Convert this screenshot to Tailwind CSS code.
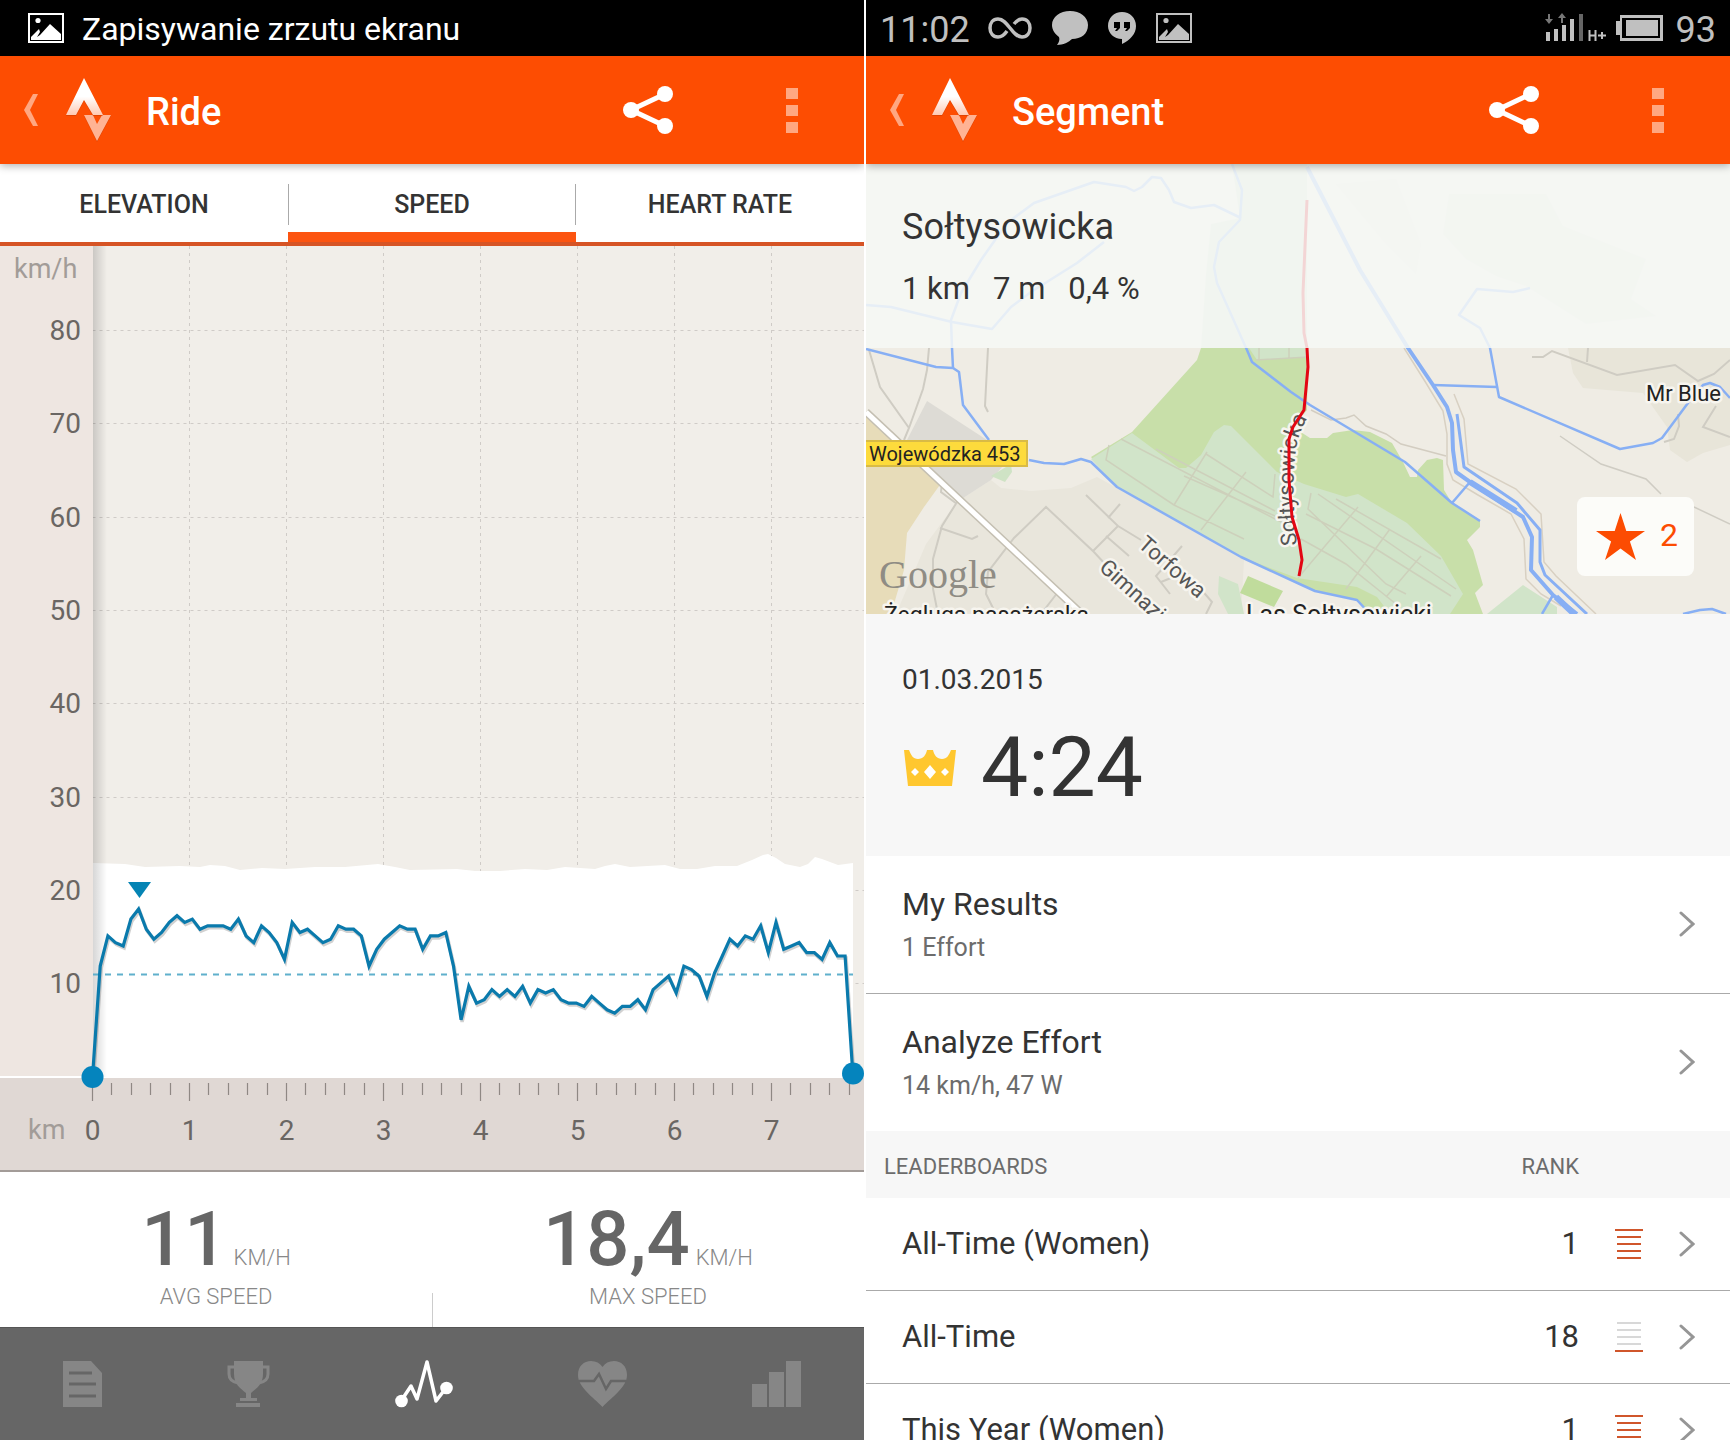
<!DOCTYPE html>
<html lang="en">
  <head>
    <meta charset="utf-8" />
    <meta name="viewport" content="width=device-width" />
    <title>Ride / Segment</title>
    <script src="https://cdn.jsdelivr.net/npm/@tailwindcss/browser@4"></script>
  </head>
  <body class="bg-white font-['Roboto','Noto_Sans',sans-serif] text-[#333]">
    <main class="grid grid-cols-2 gap-0.5 h-screen overflow-hidden">
      <!-- Ride screen -->
      <section class="flex flex-col min-w-0 overflow-hidden">
        <div class="flex items-center shrink-0 h-14 px-7 gap-[18px] bg-black text-white">
          <svg class="w-9 h-[30px]" viewBox="0 0 36 30">
            <rect x="1" y="1" width="34" height="28" fill="none" stroke="#fff" stroke-width="2" />
            <circle cx="10" cy="7.500" r="2.600" fill="#fff" />
            <path d="M3 27V24L11 16L12 19L9 24L12 22L22 11L33 21V27Z" fill="#fff" />
          </svg>
          <p class="pt-0.5 text-[32px] leading-9">Zapisywanie zrzutu ekranu</p>
        </div>

        <header class="relative z-10 flex items-center shrink-0 h-[108px] pl-6 pr-[66px] bg-[#fd4d02] text-white shadow-[0_2px_8px_rgba(0,0,0,0.3)]">
          <button class="flex items-center gap-7" aria-label="Back">
            <svg class="w-3.5 h-8" viewBox="0 0 14 32">
              <path d="M9 0H14L6 16L14 32H9L0 16Z" fill="#ffa781" />
            </svg>
            <svg class="w-[46px] h-16" viewBox="0 0 46 64">
              <defs>
                <linearGradient id="logoTop" x1="0" y1="0" x2="0" y2="1">
                  <stop offset="0.500" stop-color="#fff" />
                  <stop offset="1" stop-color="#ffc9b2" />
                </linearGradient>
              </defs>
              <path d="M18 38H27L31 47L36 38H45L31 64Z" fill="#c33a00" opacity="0.500" />
              <path d="M18 37H27L31 46L36 37H45L31 63Z" fill="#ffb394" />
              <path d="M18 1L0 38H10L18 23L27 38H37Z" fill="#c33a00" opacity="0.500" />
              <path d="M18 0L0 37H10L18 22L27 37H37Z" fill="url(#logoTop)" />
            </svg>
          </button>
          <h1 class="ml-[34px] pt-1 text-[38px] leading-[44px] font-medium">Ride</h1>
          <button class="ml-auto" aria-label="Share">
            <svg class="w-[50px] h-12" viewBox="0 0 50 48">
              <path d="M42 8L8 24L42 40" fill="none" stroke="#fff" stroke-width="5" />
              <circle cx="8" cy="24" r="8" fill="#fff" />
              <circle cx="42" cy="8" r="8" fill="#fff" />
              <circle cx="42" cy="40" r="8" fill="#fff" />
            </svg>
          </button>
          <button class="ml-[113px] flex flex-col gap-1.5" aria-label="More options">
            <span class="w-3 h-[11px] bg-[#ffa781]"></span>
            <span class="w-3 h-[11px] bg-[#ffa781]"></span>
            <span class="w-3 h-[11px] bg-[#ffa781]"></span>
          </button>
        </header>

        <nav class="grid grid-cols-3 shrink-0 h-[82px] border-b-4 border-[#d65425] text-[25px] leading-8 font-medium">
          <button class="flex items-center justify-center pt-1">ELEVATION</button>
          <button class="flex items-center justify-center pt-1 relative">
            SPEED
            <span class="absolute left-0 top-5 h-[41px] w-px bg-[#aaa]"></span>
            <span class="absolute right-0 top-5 h-[41px] w-px bg-[#aaa]"></span>
            <span class="absolute inset-x-0 bottom-0 h-2.5 bg-[#fc5410]"></span>
          </button>
          <button class="flex items-center justify-center pt-1">HEART RATE</button>
        </nav>

        <svg id="chart" class="block w-full h-auto shrink-0" viewBox="0 246 864 926" font-size="28" fill="#6a6663">
          <defs>
            <linearGradient id="axisShade">
              <stop offset="0" stop-color="#000" stop-opacity="0.160" />
              <stop offset="1" stop-color="#000" stop-opacity="0" />
            </linearGradient>
          </defs>
          <rect x="0" y="246" width="864" height="832" fill="#f1eee9" />
          <g id="grid" stroke="#cfcbc7" stroke-dasharray="3 4"></g>
          <path
            d="M93 863L125 864L145 867L180 866L200 867L210 865L225 866L240 870L262 868L285 869L315 867L345 867L378 864L395 867L410 870L457 869L475 871L500 871L525 869L547 870L565 867L595 869L605 866L615 864L630 867L665 865L680 869L697 869L715 866L737 866L752 860L763 855L768 854L776 858L785 864L800 867L808 864L815 857L822 859L838 865L853 863V1078H93Z"
            fill="#fff"
          />
          <rect x="93" y="246" width="14" height="831" fill="url(#axisShade)" />
          <rect x="0" y="246" width="93" height="831" fill="#eee6e1" />
          <rect x="0" y="1076" width="93" height="2" fill="#fff" />
          <rect x="0" y="1078" width="864" height="92" fill="#e0d8d4" />
          <rect x="0" y="1170" width="864" height="2" fill="#a39c98" />
          <g id="ticks" stroke="#8f8884" stroke-width="1.200"></g>
          <g id="yLabels" text-anchor="end"></g>
          <g id="xLabels" text-anchor="middle"></g>
          <text x="14" y="278" font-size="27" fill="#a29c98">km/h</text>
          <text x="28" y="1139" font-size="27" fill="#a29c98">km</text>
          <path d="M93 974.500H853" stroke="#5fb0cc" stroke-width="2" stroke-dasharray="6 6" />
          <polyline id="speedShadow" fill="none" stroke="#000" stroke-opacity="0.180" stroke-width="3.500" transform="translate(1 2)" />
          <polyline id="speedLine" fill="none" stroke="#0a7aac" stroke-width="3.200" />
          <path d="M128 882H151L139.500 898Z" fill="#0584b4" />
          <circle cx="92.500" cy="1077" r="11" fill="#0584bd" />
          <circle cx="853" cy="1073.500" r="11" fill="#0584bd" />
        </svg>

        <div class="relative grid grid-cols-2 shrink-0 h-[155px] pt-[27px] text-center">
          <div>
            <p class="flex items-baseline justify-center gap-1.5">
              <span class="text-[76px] leading-20 font-medium text-[#666]">11</span>
              <span class="text-[22px] font-light text-[#888]">KM/H</span>
            </p>
            <p class="mt-1 text-[22px] leading-7 font-light text-[#888]">AVG SPEED</p>
          </div>
          <div>
            <p class="flex items-baseline justify-center gap-1.5">
              <span class="text-[76px] leading-20 font-medium text-[#666]">18,4</span>
              <span class="text-[22px] font-light text-[#888]">KM/H</span>
            </p>
            <p class="mt-1 text-[22px] leading-7 font-light text-[#888]">MAX SPEED</p>
          </div>
          <span class="absolute left-1/2 bottom-0 w-px h-[34px] bg-[#ccc]"></span>
        </div>

        <nav class="flex grow items-center justify-between px-[63px] min-h-28 border-t border-[#555] bg-[#666]">
          <button aria-label="Details">
            <svg class="w-[39px] h-12" viewBox="0 0 39 48">
              <path d="M0 1H28L39 13V47H0Z" fill="#868686" />
              <path d="M6 13H29M6 24H33M6 36H33" stroke="#666" stroke-width="3" />
            </svg>
          </button>
          <button aria-label="Achievements">
            <svg class="w-[43px] h-12" viewBox="0 0 43 48" fill="#868686">
              <path d="M7 1H36V14C36 24 30 28 24 33V38H30V41H13V38H19V33C13 28 7 24 7 14Z" />
              <path d="M8 7H2V14C2 19 6 22 11 23M35 7H41V14C41 19 37 22 32 23" fill="none" stroke="#868686" stroke-width="3" />
              <rect x="9" y="43" width="24" height="4" />
            </svg>
          </button>
          <button aria-label="Analysis">
            <svg class="w-[58px] h-12" viewBox="0 0 58 48">
              <path d="M6 41L16 26L22 39L32 2L41 41L51 28" fill="none" stroke="#fff" stroke-width="3.500" stroke-linejoin="round" />
              <circle cx="6.500" cy="41" r="6.300" fill="#fff" />
              <circle cx="51.500" cy="28" r="6.300" fill="#fff" />
            </svg>
          </button>
          <button aria-label="Heart rate">
            <svg class="w-[49px] h-12" viewBox="0 0 49 48">
              <path d="M24.500 47C15 37 0 27 0 15C0 6 6 1 13 1C18 1 22 3 24.500 7C27 3 31 1 36 1C43 1 49 6 49 15C49 27 34 37 24.500 47Z" fill="#868686" />
              <path d="M1 21H16L21 14L28 29L33 21H48" fill="none" stroke="#666" stroke-width="2.500" />
            </svg>
          </button>
          <button aria-label="Zones">
            <svg class="w-[49px] h-12" viewBox="0 0 49 48" fill="#868686">
              <rect x="0" y="24" width="15" height="23" />
              <rect x="17" y="12" width="15" height="35" />
              <rect x="34" y="1" width="15" height="46" />
            </svg>
          </button>
        </nav>
      </section>

      <!-- Segment screen -->
      <section class="flex flex-col min-w-0 overflow-hidden">
        <div class="flex items-center shrink-0 h-14 px-3.5 bg-black text-[#c0c0c0] text-[36px] leading-9">
          <time class="pt-1">11:02</time>
          <svg class="ml-[18px] w-11 h-6" viewBox="0 0 44 24">
            <path
              d="M26 8C29 4 31 3 34 3C39 3 42 7 42 12C42 17 39 21 34 21C24 21 20 3 10 3C5 3 2 7 2 12C2 17 5 21 10 21C14 21 17 18 19 15"
              fill="none"
              stroke="#c0c0c0"
              stroke-width="3.500"
            />
          </svg>
          <svg class="ml-5 w-9 h-[34px]" viewBox="0 0 36 34">
            <path d="M18 0C28 0 36 6 36 14C36 23 29 28 20 28C17 31 11 34 5 34C7 31 8 29 7 26C3 23 0 19 0 14C0 6 8 0 18 0Z" fill="#c0c0c0" />
          </svg>
          <svg class="ml-5 w-7 h-[34px]" viewBox="0 0 28 34">
            <path d="M14 1C22 1 28 7 28 15C28 23 22 29 14 33V28C6 28 0 22 0 15C0 7 6 1 14 1Z" fill="#c0c0c0" />
            <path d="M6 11H12V17L9 20H7L9 17H6ZM16 11H22V17L19 20H17L19 17H16Z" fill="#000" />
          </svg>
          <svg class="ml-5 w-9 h-[30px]" viewBox="0 0 36 30">
            <rect x="1" y="1" width="34" height="28" fill="none" stroke="#c0c0c0" stroke-width="2" />
            <circle cx="10" cy="7.500" r="2.600" fill="#c0c0c0" />
            <path d="M3 27V24L11 16L12 19L9 24L12 22L22 11L33 21V27Z" fill="#c0c0c0" />
          </svg>
          <svg class="ml-auto w-[62px] h-[30px]" viewBox="0 0 62 30">
            <path d="M2 19H6V28H2ZM10 16H14V28H10ZM18 12H22V28H18ZM26 6H30V28H26Z" fill="#c0c0c0" />
            <path d="M35 1H39V28H35Z" fill="#666" />
            <path d="M4 1H6V6H9L5 11L1 6H4ZM17 10H19V5H22L18 0L14 5H17Z" fill="#777" />
            <path d="M45.500 17V28M51.500 17V28M45 22.500H52M54 22.500H62M58 19V26" stroke="#c0c0c0" stroke-width="2" />
          </svg>
          <svg class="ml-2.5 w-12 h-7" viewBox="0 0 48 28">
            <path d="M4 1H47V27H4V21H0V7H4Z" fill="#c0c0c0" />
            <rect x="6" y="4" width="38" height="20" fill="#000" />
            <rect x="10" y="6" width="32" height="16" fill="#c0c0c0" />
          </svg>
          <span class="ml-3 pt-1">93</span>
        </div>

        <header class="relative z-10 flex items-center shrink-0 h-[108px] pl-6 pr-[66px] bg-[#fd4d02] text-white shadow-[0_2px_8px_rgba(0,0,0,0.3)]">
          <button class="flex items-center gap-7" aria-label="Back">
            <svg class="w-3.5 h-8" viewBox="0 0 14 32">
              <path d="M9 0H14L6 16L14 32H9L0 16Z" fill="#ffa781" />
            </svg>
            <svg class="w-[46px] h-16" viewBox="0 0 46 64">
              <path d="M18 38H27L31 47L36 38H45L31 64Z" fill="#c33a00" opacity="0.500" />
              <path d="M18 37H27L31 46L36 37H45L31 63Z" fill="#ffb394" />
              <path d="M18 1L0 38H10L18 23L27 38H37Z" fill="#c33a00" opacity="0.500" />
              <path d="M18 0L0 37H10L18 22L27 37H37Z" fill="url(#logoTop)" />
            </svg>
          </button>
          <h1 class="ml-[34px] pt-1 text-[38px] leading-[44px] font-medium">Segment</h1>
          <button class="ml-auto" aria-label="Share">
            <svg class="w-[50px] h-12" viewBox="0 0 50 48">
              <path d="M42 8L8 24L42 40" fill="none" stroke="#fff" stroke-width="5" />
              <circle cx="8" cy="24" r="8" fill="#fff" />
              <circle cx="42" cy="8" r="8" fill="#fff" />
              <circle cx="42" cy="40" r="8" fill="#fff" />
            </svg>
          </button>
          <button class="ml-[113px] flex flex-col gap-1.5" aria-label="More options">
            <span class="w-3 h-[11px] bg-[#ffa781]"></span>
            <span class="w-3 h-[11px] bg-[#ffa781]"></span>
            <span class="w-3 h-[11px] bg-[#ffa781]"></span>
          </button>
        </header>

        <div class="relative shrink-0">
          <svg class="block w-full h-auto" viewBox="0 0 864 450">
            <rect width="864" height="450" fill="#efece4" />
            <!-- built-up areas -->
            <path d="M125 316L135 324L165 327L205 324L231 313L251 324L378 396L375 450H30L60 380L91 338Z" fill="#e9e6dc" />
            <path d="M702 184L707 209L717 224L777 229L801 263L804 286L821 298L837 289L864 281V184Z" fill="#e8e5d9" />
            <path d="M61 237L121 276L142 296L125 316L91 338L65 306L41 276Z" fill="#dddbd5" />
            <path d="M0 250L23 273L76 318L58 343L41 369L38 406L25 450H0Z" fill="#e7dcb9" />
            <!-- woods and allotments -->
            <path d="M366 0H441V184H335L340 110L345 60L374 54Z" fill="#d6e4cc" />
            <path d="M583 30H680L697 62L780 95L765 135L790 152L720 160L660 122L630 112L600 95L577 70Z" fill="#e2e8d6" />
            <path d="M470 20L530 15L555 80L550 110L520 80Z" fill="#e8ead9" />
            <path
              d="M335 184L331 196L266 268L225 293L251 323L375 393L438 422L449 427L491 436L504 450H617L609 429L617 421L607 386L601 376L614 363V356L586 339L578 326L577 296L571 294L561 296L552 306L551 313H544L537 298L526 279L504 268L487 266L467 269L461 274H444L427 263L441 246L442 184Z"
              fill="#c8dfa9"
            />
            <path d="M225 295L266 269L313 304H320L335 291L348 268L358 261L365 262L411 308L438 320L480 333L492 330L541 359L575 392L597 430L584 450H524L511 433L491 423L431 414L375 393L251 323Z" fill="#d1e4c9" />
            <path d="M383 184H442V193L391 196Z" fill="#d1e4c9" />
            <path d="M382 412L417 427L408 443L374 429Z" fill="#c0dc9c" />
            <path d="M353 412L372 420L378 450H362L352 430Z" fill="#d1e4c9" />
            <path d="M145 300L125 312L139 318L146 308Z" fill="#cfe3c5" />
            <path d="M657 421L691 443V450H621Z" fill="#d1e4c9" />
            <g fill="none" stroke="#cdd0bb" stroke-width="1.500">
              <path d="M243 281L240 296L308 341L378 375M255 275L411 356L420 360M290 285L409 347M318 312L409 352M341 288L308 341M380 308L335 366M340 290L407 333L409 310M390 196L442 193M393 184V196M423 184V194" />
              <path d="M445 329L442 345L520 420L540 430M492 343L432 414M524 365L480 425M555 392L520 433M452 330L590 425M440 350L510 385L585 432M435 375L480 400L530 440M470 335L575 395" />
              <path d="M445 246L465 256L480 254L488 251L500 262L520 270L535 280L580 292" stroke="#d3cdc1" />
            </g>
            <!-- minor roads -->
            <g fill="none" stroke="#cfccc3" stroke-width="2">
              <path d="M3 186L14 223L43 264M63 184L61 206L57 225L43 264L38 276M122 184L119 242L122 248" />
              <path d="M91 338L76 362L67 395V425L72 450M74 364L106 375L112 372M76 318L75 328L91 340" />
              <path d="M220 331L252 362L227 387L180 343L148 374L122 408L120 430L130 450M227 387L240 401M254 340L242 354M252 362L275 376M240 372L263 392M316 382L290 412L304 430M295 418L320 408L346 438L340 450M192 428L175 450" />
              <path d="M666 193H677L686 187L751 211L809 201L832 217L848 210L864 196M721 198L722 184M850 242L837 263L864 273M812 250L813 262L808 275L798 278" />
              <path d="M694 272L735 300L780 315L795 330M828 343L864 360" stroke-width="1.500" />
              <path d="M538 184L560 219L577 247L581 270V300L587 316L612 331L645 350L658 375L660 415L675 430L695 442M588 230L598 255L602 300L650 325L675 350L678 398L690 412L730 450" stroke="#d8d0c2" stroke-width="1.500" />
            </g>
            <path d="M0 248L218 452" stroke="#c4bfb2" stroke-width="8" />
            <path d="M0 248L218 452" stroke="#fff" stroke-width="5" />
            <!-- water -->
            <g fill="none" stroke="#87aff4" stroke-width="2.500" stroke-linejoin="round">
              <path d="M0 185L70 203L87 204L93 208L97 241L123 276" />
              <path d="M87 204L86 184L85 156L95 129L115 96L141 59L168 39L228 18L260 23L268 27L276 23L286 13L295 14L303 26L308 38L325 44L348 41L375 54" />
              <path d="M0 141L25 143L86 158L126 165L145 143L165 128L211 99L238 78" />
              <path d="M366 0L376 26L374 56L353 78L348 103L351 119L381 186L386 198L425 228L444 241L539 298L586 339L614 357" />
              <path d="M163 296L178 299L198 300L215 295L225 298L251 323L375 393L438 422L449 427L491 436L504 450" />
              <path d="M664 124L647 128L611 125L593 151L614 164L624 184L633 233L754 285L787 279L796 274L822 239L837 221L844 219L854 223L864 234M567 221L631 223" />
              <path d="M591 250L598 303L651 339L674 366V398L679 411L721 450" stroke-width="3" />
              <path d="M441 3L494 106L542 184L567 221L581 243L586 259L587 286L590 308L604 318L657 353L666 373L665 406L687 431L711 450" stroke-width="4" />
              <path d="M604 318L650 347M690 433L708 450" stroke-width="6" />
              <path d="M604 318L586 339M687 431L676 450M817 450L834 446L846 445L860 450" />
            </g>
            <rect x="-2" y="277" width="163" height="25" fill="#fddb3c" stroke="#d9bb45" stroke-width="2" />
            <text x="3" y="297" font-size="20" fill="#222">Wojewódzka 453</text>
            <text x="13" y="424" font-size="40" fill="#8f8c84" class="font-['Liberation_Serif',serif]">Google</text>
            <path id="street" d="M431 381C426 340 427 300 431 280C433 268 440 256 450 240" fill="none" />
            <g font-size="22" stroke="#f7f5ef" stroke-width="5" stroke-linejoin="round" paint-order="stroke">
              <g fill="#555">
                <text transform="translate(271 382) rotate(41)">Torfowa</text>
                <text transform="translate(232 405) rotate(42)">Gimnazjalna</text>
                <text><textPath href="#street">Sołtysowicka</textPath></text>
              </g>
              <g fill="#222">
                <text x="780" y="237">Mr Blue</text>
                <text x="18" y="459" font-size="23">Żegluga pasażerska</text>
                <text x="380" y="459" font-size="25">Las Sołtysowicki</text>
              </g>
            </g>
            <path d="M441 36L437 129L438 169L441 184L442 203L438 246L427 263L423 275V316L426 353L433 376L436 396L433 412" fill="none" stroke="#e30613" stroke-width="3" stroke-linejoin="round" />
          </svg>
          <div class="absolute inset-x-0 top-0 h-[184px] pt-[41px] px-9 bg-[#f6f8f6]/86">
            <h2 class="text-[36px] leading-11">Sołtysowicka</h2>
            <p class="flex gap-[23px] mt-5 text-[31px] leading-10">
              <span>1 km</span>
              <span>7 m</span>
              <span>0,4 %</span>
            </p>
          </div>
          <button class="absolute right-9 bottom-[38px] flex items-center gap-[15px] h-[79px] pl-[19px] pr-4 rounded-lg bg-[#fcfcf9] text-[#fc4c02] text-[32px]">
            <svg class="w-[49px] h-[47px]" viewBox="0 0 49 47">
              <path d="M24.500 0L30.300 18H49L33.900 28.500L40 47L24.500 35.500L9 47L15.100 28.500L0 18H18.700Z" fill="#fc4c02" />
            </svg>
            <span class="pb-1">2</span>
          </button>
        </div>

        <div class="shrink-0 h-[242px] pt-12 px-9 bg-[#f7f7f7]">
          <p class="text-[28px] leading-9">01.03.2015</p>
          <p class="flex items-center gap-[23px] mt-7 text-[84px] leading-[84px]">
            <svg class="w-14 h-9" viewBox="0 0 56 36" aria-label="Course record">
              <path d="M2 0H7C9 5 11 9 16 9C21 9 24 5 25 0H31C32 5 35 9 40 9C45 9 47 5 49 0H54L50 36H6Z" fill="#ffc72f" />
              <path d="M28 15L34 22L28 29L22 22ZM13 18L17 22L13 26L9 22ZM43 18L47 22L43 26L39 22Z" fill="#fff" />
            </svg>
            4:24
          </p>
        </div>

        <a href="#results" class="flex items-center justify-between shrink-0 pt-7 pb-[29px] pl-9 pr-[35px] border-b border-[#aaa]">
          <span>
            <span class="block text-[32px] leading-10">My Results</span>
            <span class="block mt-2 text-[25px] leading-8 text-[#6c6c6c]">1 Effort</span>
          </span>
          <svg class="w-4 h-[26px]" viewBox="0 0 16 26">
            <path d="M2 2L14 13L2 24" fill="none" stroke="#969696" stroke-width="3" stroke-linecap="round" />
          </svg>
        </a>
        <a href="#analyze" class="flex items-center justify-between shrink-0 pt-7 pb-[29px] pl-9 pr-[35px]">
          <span>
            <span class="block text-[32px] leading-10">Analyze Effort</span>
            <span class="block mt-2 text-[25px] leading-8 text-[#6c6c6c]">14 km/h, 47 W</span>
          </span>
          <svg class="w-4 h-[26px]" viewBox="0 0 16 26">
            <path d="M2 2L14 13L2 24" fill="none" stroke="#969696" stroke-width="3" stroke-linecap="round" />
          </svg>
        </a>

        <table class="w-full text-[31px] leading-10">
          <thead class="bg-[#f7f7f7] text-[22px] leading-7 text-[#6c6c6c]">
            <tr class="h-[67px]">
              <th class="pt-1 pl-[18px] text-left font-normal">LEADERBOARDS</th>
              <th class="pt-1 text-right font-normal">RANK</th>
              <th class="w-[151px]"></th>
            </tr>
          </thead>
          <tbody>
            <tr class="h-[92px] border-b border-[#aaa]">
              <td class="pl-9">All-Time (Women)</td>
              <td class="text-right">1</td>
              <td class="pl-9 pr-[35px]">
                <a href="#women" class="flex items-center justify-between" aria-label="All-Time (Women)">
                  <svg class="w-7 h-[30px]" viewBox="0 0 28 30">
                    <path d="M0 1H28M2 8H26M2 15H26M2 22H26M2 29H26" stroke="#d0562b" stroke-width="2" />
                  </svg>
                  <svg class="w-4 h-[26px]" viewBox="0 0 16 26">
                    <path d="M2 2L14 13L2 24" fill="none" stroke="#969696" stroke-width="3" stroke-linecap="round" />
                  </svg>
                </a>
              </td>
            </tr>
            <tr class="h-[93px] border-b border-[#aaa]">
              <td class="pl-9">All-Time</td>
              <td class="text-right">18</td>
              <td class="pl-9 pr-[35px]">
                <a href="#all" class="flex items-center justify-between" aria-label="All-Time">
                  <svg class="w-7 h-[30px]" viewBox="0 0 28 30">
                    <path d="M2 1H26M2 8H26M2 15H26M2 22H26" stroke="#d8d8d8" stroke-width="2" />
                    <path d="M0 29H28" stroke="#d0562b" stroke-width="2" />
                  </svg>
                  <svg class="w-4 h-[26px]" viewBox="0 0 16 26">
                    <path d="M2 2L14 13L2 24" fill="none" stroke="#969696" stroke-width="3" stroke-linecap="round" />
                  </svg>
                </a>
              </td>
            </tr>
            <tr class="h-[93px] border-b border-[#aaa]">
              <td class="pl-9">This Year (Women)</td>
              <td class="text-right">1</td>
              <td class="pl-9 pr-[35px]">
                <a href="#year" class="flex items-center justify-between" aria-label="This Year (Women)">
                  <svg class="w-7 h-[30px]" viewBox="0 0 28 30">
                    <path d="M0 1H28M2 8H26M2 15H26M2 22H26M2 29H26" stroke="#d0562b" stroke-width="2" />
                  </svg>
                  <svg class="w-4 h-[26px]" viewBox="0 0 16 26">
                    <path d="M2 2L14 13L2 24" fill="none" stroke="#969696" stroke-width="3" stroke-linecap="round" />
                  </svg>
                </a>
              </td>
            </tr>
          </tbody>
        </table>
      </section>
    </main>

    <script>
      // speed samples, in tenths of m/s
      const speeds = [
        0, 33, 42, 40, 39, 47, 50, 44, 41, 43, 46, 48, 46, 47, 44, 45, 45, 45,
        44, 47, 42, 40, 45, 43, 40, 35, 46, 43, 44, 42, 40, 41, 45, 44, 44, 42,
        33, 38, 41, 43, 45, 44, 44, 38, 42, 42, 43, 33, 17, 27, 22, 23, 26, 24,
        26, 24, 27, 22, 26, 25, 26, 23, 22, 22, 21, 24, 22, 20, 19, 21, 21, 23,
        20, 26, 28, 30, 25, 33, 32, 30, 24, 31, 36, 41, 39, 42, 41, 45, 37, 46,
        38, 39, 40, 37, 37, 35, 40, 36, 36, 1,
      ];
      const left = 92.5;
      const bottom = 1077;
      const kmWidth = 97;
      const kmhHeight = 9.33;

      function add(parent, tag, attrs, text) {
        const el = document.createElementNS("http://www.w3.org/2000/svg", tag);
        for (const key in attrs) el.setAttribute(key, attrs[key]);
        if (text !== undefined) el.textContent = text;
        document.getElementById(parent).appendChild(el);
      }

      for (let v = 10; v <= 80; v += 10) {
        const y = Math.floor(bottom - v * kmhHeight);
        add("grid", "path", { d: `M${left} ${y + 0.5}H864` });
        add("yLabels", "text", { x: 81, y: y + 10 }, v);
      }

      for (let i = 0; i <= 39; i++) {
        const x = Math.floor(left + (i * kmWidth) / 5) + 0.5;
        const major = i % 5 === 0;
        add("ticks", "path", { d: `M${x} 1083V${major ? 1101 : 1095}` });
        if (major) {
          if (i) add("grid", "path", { d: `M${x} 246V1077` });
          add("xLabels", "text", { x: x, y: 1140 }, i / 5);
        }
      }

      const points = speeds
        .map((s, i) => `${(left + i * 7.68).toFixed(1)},${(bottom - s * 3.36).toFixed(1)}`)
        .join(" ");
      document.getElementById("speedLine").setAttribute("points", points);
      document.getElementById("speedShadow").setAttribute("points", points);
    </script>
  </body>
</html>
